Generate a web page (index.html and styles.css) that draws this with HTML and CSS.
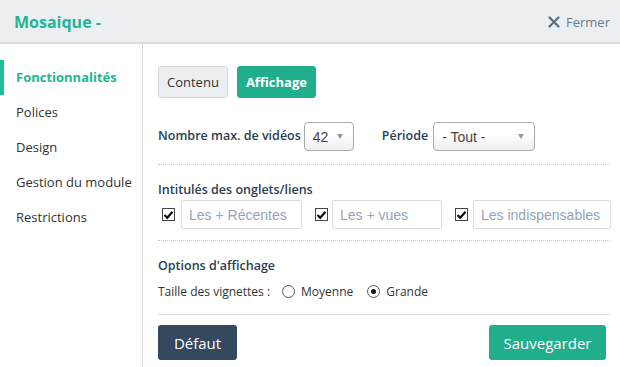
FILE: index.html
```html
<!DOCTYPE html>
<html lang="fr">
<head>
  <meta charset="UTF-8">
  <title>Mosaique</title>
  <link rel="stylesheet" href="styles.css">
</head>
<body>
  <div class="header">
    <div class="header__title">Mosaique -</div>
    <a class="header__close" href="#">
      <svg width="12" height="12" viewBox="0 0 12 12"><path d="M1.5 1.5 L10.5 10.5 M10.5 1.5 L1.5 10.5" stroke="#5d6d7e" stroke-width="2.2" stroke-linecap="round"/></svg>
      Fermer
    </a>
  </div>

  <div class="main">
    <ul class="sidebar">
      <li class="sidebar__item sidebar__item--active">Fonctionnalités</li>
      <li class="sidebar__item">Polices</li>
      <li class="sidebar__item">Design</li>
      <li class="sidebar__item">Gestion du module</li>
      <li class="sidebar__item">Restrictions</li>
    </ul>

    <div class="content">
      <div class="tabs">
        <button class="tab">Contenu</button>
        <button class="tab tab--active">Affichage</button>
      </div>

      <div class="row row--selects">
        <span class="label">Nombre max. de vidéos</span>
        <div class="select select--small">42 <span class="select__arrow"></span></div>
        <span class="label label--period">Période</span>
        <div class="select select--wide">- Tout - <span class="select__arrow"></span></div>
      </div>

      <div class="section">
        <div class="label">Intitulés des onglets/liens</div>
        <div class="fields">
          <span class="check"><svg width="11" height="10" viewBox="0 0 11 10"><path d="M1.5 5 L4.2 7.8 L9.5 1.8" fill="none" stroke="#111" stroke-width="2.2"/></svg></span>
          <input class="field field--first" placeholder="Les + Récentes">
          <span class="check check--gap"><svg width="11" height="10" viewBox="0 0 11 10"><path d="M1.5 5 L4.2 7.8 L9.5 1.8" fill="none" stroke="#111" stroke-width="2.2"/></svg></span>
          <input class="field field--second" placeholder="Les + vues">
          <span class="check check--gap"><svg width="11" height="10" viewBox="0 0 11 10"><path d="M1.5 5 L4.2 7.8 L9.5 1.8" fill="none" stroke="#111" stroke-width="2.2"/></svg></span>
          <input class="field field--third" placeholder="Les indispensables">
        </div>
      </div>

      <div class="section section--options">
        <div class="label">Options d'affichage</div>
        <div class="radios">
          <span>Taille des vignettes :</span>
          <span class="radio"></span><span>Moyenne</span>
          <span class="radio radio--on"></span><span>Grande</span>
        </div>
      </div>

      <div class="actions">
        <button class="btn btn--dark">Défaut</button>
        <button class="btn btn--green">Sauvegarder</button>
      </div>
    </div>
  </div>
</body>
</html>
```

FILE: styles.css
```css
body {
  margin: 0;
  font-family: "Open Sans", Arial, sans-serif;
  font-size: 13px;
  color: #333;
  background: #fff;
  overflow: hidden;
}

.header {
  height: 42px;
  background: #eceff2;
  border-bottom: 2px solid #d9dde1;
  display: flex;
  align-items: center;
  justify-content: space-between;
  padding: 0 10px 0 14px;
}

.header__title {
  font-size: 16px;
  font-weight: bold;
  color: #1fb596;
  margin-top: 1px;
}

.header__close {
  color: #6c7a89;
  text-decoration: none;
  font-size: 13px;
  display: flex;
  align-items: center;
  gap: 6px;
  margin-top: 1px;
}

.main {
  display: flex;
  height: 323px;
}

.sidebar {
  list-style: none;
  margin: 0;
  padding: 16px 0 0;
  width: 142px;
  flex-shrink: 0;
  border-right: 1px solid #ddd;
}

.sidebar__item {
  height: 35px;
  line-height: 34px;
  padding-left: 16px;
  color: #333;
}

.sidebar__item--active {
  color: #1fb596;
  font-weight: bold;
  border-left: 4px solid #1fbf9c;
  padding-left: 12px;
}

.content {
  flex: 1;
  min-width: 0;
  padding: 22px 10px 0 15px;
}

.tabs {
  display: flex;
  gap: 9px;
}

.tab {
  height: 32px;
  font-family: "Open Sans", Arial, sans-serif;
  font-size: 13px;
  border-radius: 3px;
  border: 1px solid #d5d9dd;
  background: #eceff2;
  color: #333;
  padding: 0 8px;
}

.tab--active {
  background: #21ae8c;
  border-color: #21ae8c;
  color: #fff;
  font-weight: bold;
}

.label {
  font-weight: 600;
  color: #2c3e50;
  font-size: 12.5px;
}

.row--selects {
  display: flex;
  align-items: center;
  margin-top: 21px;
  padding-bottom: 13px;
  border-bottom: 1px dotted #c8c8c8;
}

.label--period {
  margin-left: 28px;
  margin-right: 5px;
}

.select {
  border: 1px solid #aaa;
  border-radius: 4px;
  background: linear-gradient(#fff 40%, #eee);
  font-family: "Liberation Sans", Arial, sans-serif;
  font-size: 14px;
  color: #444;
  display: flex;
  align-items: center;
  justify-content: space-between;
  padding: 0 8px;
  box-sizing: border-box;
  height: 29px;
  margin-top: 3px;
}

.select--small {
  width: 50px;
  margin-left: 3px;
}

.select--wide {
  width: 102px;
}

.select__arrow {
  width: 0;
  height: 0;
  border-left: 3.5px solid transparent;
  border-right: 3.5px solid transparent;
  border-top: 5px solid #999;
  margin-right: 2px;
}

.section {
  padding: 16px 0 11px;
  border-bottom: 1px dotted #c8c8c8;
}

.fields {
  display: flex;
  align-items: center;
  margin-top: 2px;
}

.fields > * {
  flex-shrink: 0;
}

.check {
  width: 11px;
  height: 11px;
  border: 1px solid #444;
  background: #fff;
  display: flex;
  align-items: center;
  justify-content: center;
  margin-left: 4px;
  margin-right: 6px;
}

.check--gap {
  margin-left: 13px;
  margin-right: 4px;
}

.field {
  height: 29px;
  box-sizing: border-box;
  border: 1px solid #ddd;
  border-radius: 2px;
  font-family: "Liberation Sans", Arial, sans-serif;
  font-size: 14px;
  padding: 0 7px;
  color: #333;
}

.field::placeholder {
  color: #95a3b8;
}

.field--first { width: 121px; }
.field--second { width: 110px; }
.field--third { width: 138px; margin-left: 1px; }

.section--options {
  padding: 16px 0 14px;
  border-bottom: 1px solid #ddd;
}

.radios {
  display: flex;
  align-items: center;
  margin-top: 9px;
  font-size: 12px;
}

.radio {
  width: 11px;
  height: 11px;
  border: 1px solid #555;
  border-radius: 50%;
  margin: 0 6px 0 12px;
  position: relative;
}

.radio--on {
  margin-left: 14px;
}

.radio--on::after {
  content: "";
  position: absolute;
  left: 3px;
  top: 3px;
  width: 5px;
  height: 5px;
  border-radius: 50%;
  background: #111;
}

.actions {
  display: flex;
  justify-content: space-between;
  padding-top: 10px;
  padding-right: 4px;
}

.btn {
  height: 35px;
  border: none;
  border-radius: 3px;
  color: #fff;
  font-family: "Open Sans", Arial, sans-serif;
  font-size: 15px;
}

.btn--dark {
  background: #34495e;
  width: 79px;
}

.btn--green {
  background: #21ae8c;
  width: 117px;
}
```
